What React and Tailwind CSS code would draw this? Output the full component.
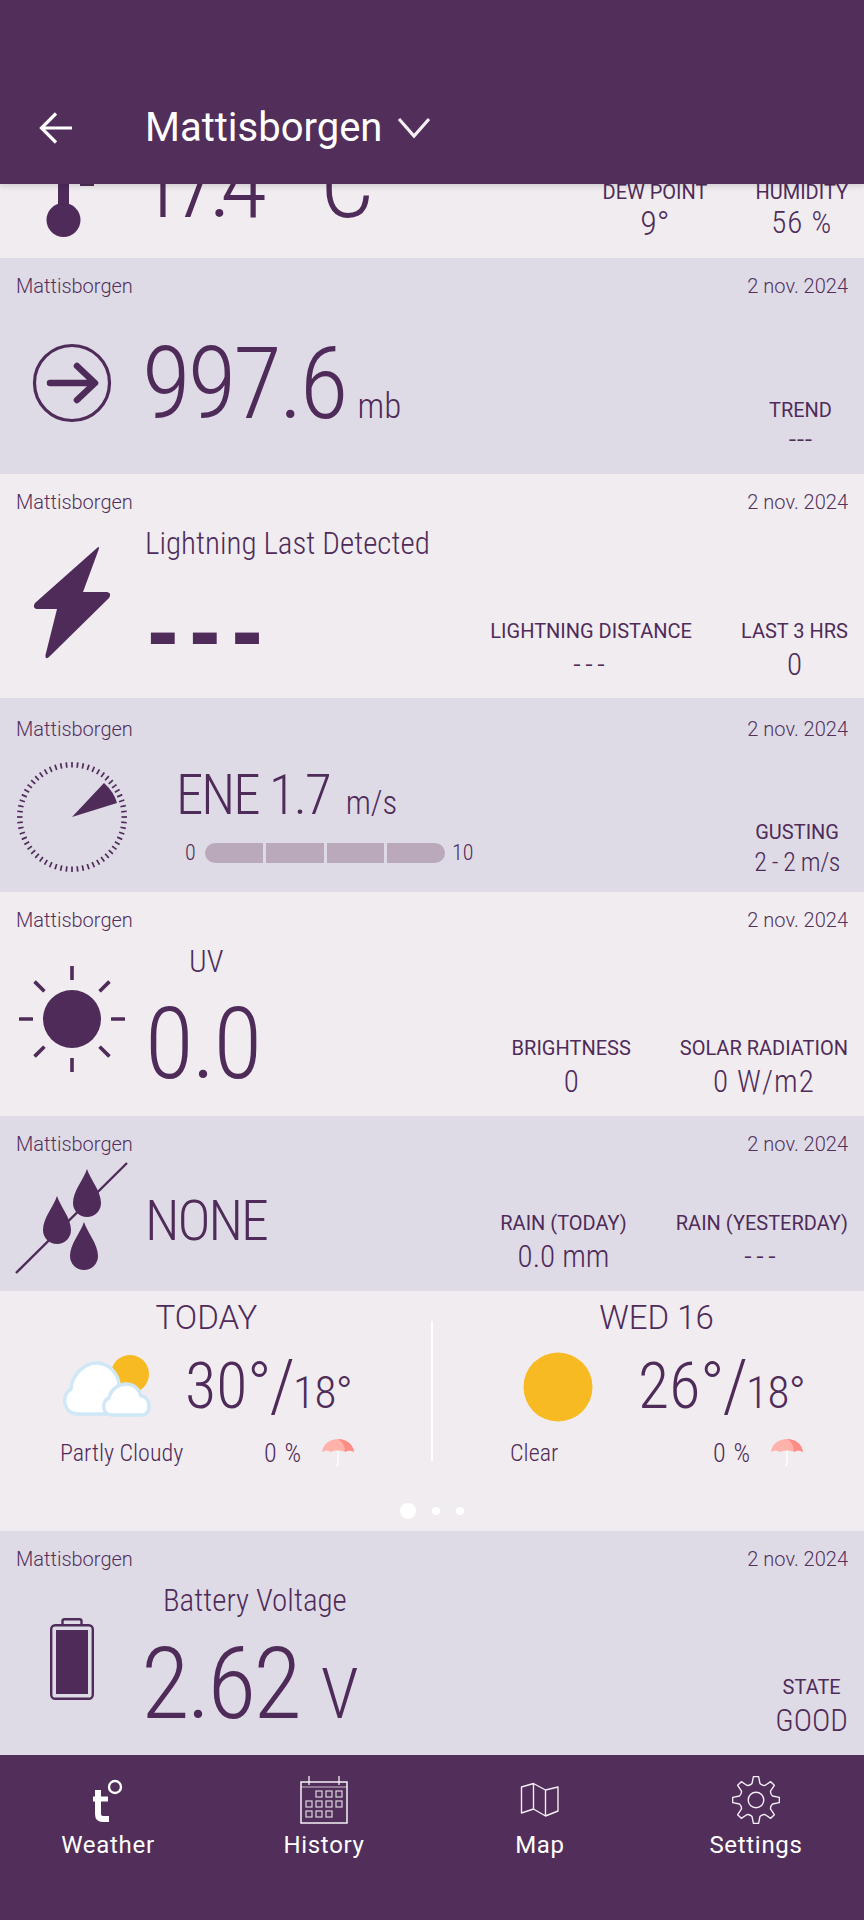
const D = "font-['Roboto'] font-light font-stretch-condensed";
const B = "font-['Roboto'] font-[360] font-stretch-condensed";

function Head({ top = "h-[56px]" }) {
  return (
    <div className={`flex justify-between items-center px-4 text-[20px] font-['Roboto'] font-light text-[#53305c] shrink-0 ${top}`}>
      <span>Mattisborgen</span>
      <span>2 nov. 2024</span>
    </div>
  );
}

function Stat({ label, value, valueClass = "text-[31px]", vm = "mt-[4px]" }) {
  return (
    <div className="flex flex-col items-center text-[#4f2b59] whitespace-nowrap">
      <span className="font-['Roboto'] font-normal text-[20px] leading-[24px]">{label}</span>
      <span className={`${D} leading-[36px] ${vm} ${valueClass}`}>{value}</span>
    </div>
  );
}

function Thermo() {
  return (
    <svg width="60" height="60" viewBox="0 0 60 60" className="ml-[40px] shrink-0">
      <rect x="18" y="-10" width="11" height="35" fill="#4f2b59" />
      <circle cx="23.5" cy="36" r="17" fill="#4f2b59" />
      <rect x="40" y="0" width="14" height="2" fill="#4f2b59" />
    </svg>
  );
}

function Pressure() {
  return (
    <svg width="80" height="80" viewBox="0 0 80 80" className="ml-[32px] shrink-0">
      <circle cx="40" cy="40" r="37.5" fill="none" stroke="#4f2b59" strokeWidth="3.2" />
      <path d="M18 40H62M45 23L63 40L45 57" fill="none" stroke="#4f2b59" strokeWidth="6.5" strokeLinecap="round" strokeLinejoin="round" />
    </svg>
  );
}

function Bolt() {
  return (
    <svg width="78" height="114" viewBox="0 0 78 114" className="ml-[33px] shrink-0">
      <path d="M64 3 Q67 0 65.5 5 L50 47 L74 47 Q79 48 76 53 L17 111 Q12 116 12.5 110 L24 64 L4 64 Q-1 63 2 58 Z" fill="#4f2b59" />
    </svg>
  );
}

function Gauge() {
  const ticks = Array.from({ length: 60 }, (_, i) => {
    const a = (i / 60) * Math.PI * 2;
    return (
      <line
        key={i}
        x1={56 + Math.cos(a) * 49.5}
        y1={56 + Math.sin(a) * 49.5}
        x2={56 + Math.cos(a) * 55}
        y2={56 + Math.sin(a) * 55}
        stroke="#4f2b59"
        strokeWidth="1.7"
      />
    );
  });
  return (
    <svg width="112" height="112" viewBox="0 0 112 112" className="ml-[16px] shrink-0">
      {ticks}
      <path d="M56 56 L88 22 Q98 31 101 42 Z" fill="#4f2b59" />
    </svg>
  );
}

function Sun() {
  const rays = [0, 45, 90, 135, 180, 225, 270, 315];
  return (
    <svg width="112" height="112" viewBox="0 0 112 112" className="ml-[16px] shrink-0">
      {rays.map((r) => (
        <rect key={r} x="54.2" y="3" width="3.6" height="14" rx="0.5" fill="#4f2b59" transform={`rotate(${r} 56 56)`} />
      ))}
      <circle cx="56" cy="56" r="29" fill="#4f2b59" />
    </svg>
  );
}

function Drops() {
  const drop = "M0 -24 C3 -14 14 -2 14 10 A14 14 0 0 1 -14 10 C-14 -2 -3 -14 0 -24Z";
  return (
    <svg width="116" height="114" viewBox="0 0 116 114" className="ml-[14px] shrink-0">
      <line x1="2" y1="112" x2="113" y2="2" stroke="#4f2b59" strokeWidth="2.4" />
      <path d={drop} transform="translate(73 32)" fill="#4f2b59" />
      <path d={drop} transform="translate(43 59)" fill="#4f2b59" />
      <path d={drop} transform="translate(70 85)" fill="#4f2b59" />
    </svg>
  );
}

function Battery() {
  return (
    <svg width="44" height="82" viewBox="0 0 44 82" className="ml-[50px] shrink-0">
      <rect x="1.2" y="7.2" width="41.6" height="73.6" rx="4" fill="none" stroke="#4f2b59" strokeWidth="2.4" />
      <path d="M12.5 7V3Q12.5 1.2 14.5 1.2H29.5Q31.5 1.2 31.5 3V7" fill="none" stroke="#4f2b59" strokeWidth="2.4" />
      <rect x="6" y="12" width="32" height="64" fill="#4f2b59" />
    </svg>
  );
}

function PartlyCloudy() {
  return (
    <svg width="92" height="66" viewBox="0 0 92 66" className="shrink-0">
      <circle cx="70" cy="20" r="19" fill="#f7ba22" />
      <path d="M18 60 C4 60 0 42 11 35 C12 18 28 8 38 9 C50 10 58 20 59 30 L62 60 Z" fill="#fff" stroke="#cfe7f6" strokeWidth="3.5" strokeLinejoin="round" />
      <path d="M52 61 C42 61 41 47 49 44 C51 34 60 30 66 30 C74 30 80 36 81 42 C91 42 92 61 82 61 Z" fill="#fff" stroke="#cfe7f6" strokeWidth="3.5" strokeLinejoin="round" />
    </svg>
  );
}

function ClearSun() {
  return (
    <svg width="70" height="70" viewBox="0 0 70 70" className="shrink-0">
      <circle cx="35" cy="35" r="34.5" fill="#f7ba22" />
    </svg>
  );
}

function Umbrella() {
  return (
    <svg width="32" height="30" viewBox="0 0 32 30" className="shrink-0">
      <path d="M16 1 V25 Q16 28 14 28" fill="none" stroke="#fff" strokeWidth="1.2" />
      <path d="M0 14 C1 6 8 1 16 1 C24 1 31 6 32 14 C28 12 26 12 23 14 C20 12 12 12 9 14 C6 12 3 12 0 14Z" fill="#ffb2aa" />
      <path d="M16 1 C21 4 23 9 23 14 C26 12 29 12 32 14 C31 6 24 1 16 1Z" fill="#ff8d84" />
    </svg>
  );
}

function Temps({ hi, lo }) {
  return (
    <div className={`${D} flex items-end text-[#4f2b59]`}>
      <span className="text-[64px] leading-[52px]">{hi}</span>
      <span className="text-[72px] leading-[52px] -mx-[2px]">/</span>
      <span className="text-[45px] leading-[40px] tracking-[-0.5px]">{lo}</span>
    </div>
  );
}

function Forecast() {
  return (
    <div className="h-[240px] bg-[#f0ecf0] flex flex-col">
      <div className="flex h-[170px] mt-[13px] text-[#4f2b59]">
        <div className="w-[431px] flex flex-col shrink-0">
          <div className="font-['Roboto'] font-light text-[33px] leading-[32px] text-center -ml-[18px] -mt-[2px]">TODAY</div>
          <div className="flex items-center mt-[18px] ml-[60px] gap-[33px] h-[70px]">
            <PartlyCloudy />
            <Temps hi="30°" lo="18°" />
          </div>
          <div className={`${D} flex items-center mt-[15px] ml-[60px] text-[24px] leading-[32px]`}>
            <span className="w-[204px]">Partly Cloudy</span>
            <span className="w-[58px] text-[26px] tracking-[1px]">0 %</span>
            <Umbrella />
          </div>
        </div>
        <div className="w-[2px] h-[140px] bg-white mt-[17px] shrink-0"></div>
        <div className="flex flex-col flex-1">
          <div className="font-['Roboto'] font-light text-[33px] leading-[32px] text-center pl-[16px] -mt-[2px]">WED 16</div>
          <div className="flex items-center mt-[18px] ml-[90px] gap-[45px] h-[70px]">
            <ClearSun />
            <Temps hi="26°" lo="18°" />
          </div>
          <div className={`${D} flex items-center mt-[15px] ml-[77px] text-[24px] leading-[32px]`}>
            <span className="w-[203px]">Clear</span>
            <span className="w-[58px] text-[26px] tracking-[1px]">0 %</span>
            <Umbrella />
          </div>
        </div>
      </div>
      <div className="flex justify-center items-center gap-[16px] mt-[29px] h-[16px]">
        <span className="w-[16px] h-[16px] rounded-full bg-white"></span>
        <span className="w-[8px] h-[8px] rounded-full bg-white"></span>
        <span className="w-[8px] h-[8px] rounded-full bg-white"></span>
      </div>
    </div>
  );
}

function Calendar() {
  return (
    <svg width="48" height="48" viewBox="0 0 48 48">
      <rect x="1" y="6" width="46" height="41" fill="none" stroke="#fff" strokeWidth="1.4" />
      <path d="M1 11H47" stroke="#fff" strokeWidth="1.2" opacity="0.7" />
      <path d="M9 0V9M39 0V9" stroke="#fff" strokeWidth="1.2" />
      {[[16,15],[26,15],[36,15],[6,25],[16,25],[26,25],[36,25],[6,35],[16,35],[26,35]].map(([x, y]) => (
        <rect key={`${x}-${y}`} x={x} y={y} width="6" height="6" fill="none" stroke="#fff" strokeWidth="1.2" opacity="0.8" />
      ))}
    </svg>
  );
}

function Gear() {
  const n = 8;
  let d = "";
  for (let i = 0; i < n; i++) {
    const a = (i / n) * Math.PI * 2 - Math.PI / 2;
    const step = (Math.PI * 2) / n;
    const p = (r, o) => `${(24 + Math.cos(a + o) * r).toFixed(2)} ${(24 + Math.sin(a + o) * r).toFixed(2)}`;
    d += `${i === 0 ? "M" : "L"}${p(17, -step * 0.3)} L${p(23.5, -step * 0.14)} L${p(23.5, step * 0.14)} L${p(17, step * 0.3)} `;
    d += `Q${p(15.5, step * 0.5)} ${p(17, step * 0.7)} `;
  }
  d += "Z";
  return (
    <svg width="48" height="48" viewBox="0 0 48 48">
      <path d={d} fill="none" stroke="#f3eef3" strokeWidth="1.4" strokeLinejoin="round" />
      <circle cx="24" cy="24" r="7.8" fill="none" stroke="#f3eef3" strokeWidth="1.4" />
    </svg>
  );
}

function MapIcon() {
  return (
    <svg width="40" height="36" viewBox="0 0 40 36" className="my-[6px]">
      <path d="M1.5 5 L13.5 1.5 L25.5 8 L38 5 V29 L25.5 34 L13.5 27 L1.5 31 Z M13.5 1.5 V27 M25.5 8 V34" fill="none" stroke="#f3eef3" strokeWidth="1.4" strokeLinejoin="round" />
    </svg>
  );
}

function TDeg() {
  return (
    <svg width="32" height="48" viewBox="0 0 32 48">
      <path d="M6 14 V38 Q6 43 11 43 H17" fill="none" stroke="#fff" strokeWidth="6" />
      <path d="M1 23 H16" stroke="#fff" strokeWidth="5" />
      <circle cx="23" cy="11" r="6" fill="none" stroke="#fff" strokeWidth="2.4" />
    </svg>
  );
}

function NavItem({ icon, label }) {
  return (
    <div className="flex-1 flex flex-col items-center">
      <div className="h-[48px] flex items-center justify-center">{icon}</div>
      <span className="text-[24px] leading-[28px] font-['Roboto'] text-white tracking-[0.7px] mt-[7px]">{label}</span>
    </div>
  );
}

export default function App() {
  return (
    <div className="w-[864px] h-[1920px] overflow-hidden flex flex-col bg-[#f0ecf0]">
      <header className="h-[184px] bg-[#522e5b] flex items-center shrink-0 relative z-10 shadow-[0_2px_6px_rgba(0,0,0,0.15)] pt-[72px]">
        <svg width="34" height="32" viewBox="0 0 34 32" className="ml-[39px]">
          <path d="M17 1.5 L2.5 16 L17 30.5 M3 16 H33" fill="none" stroke="#fff" strokeWidth="3.2" />
        </svg>
        <span className="ml-[72px] text-white text-[40px] font-['Roboto'] leading-[44px]">Mattisborgen</span>
        <svg width="34" height="22" viewBox="0 0 34 22" className="ml-[15px]">
          <path d="M2 2 L17 19 L32 2" fill="none" stroke="#f5f0f5" strokeWidth="3.2" />
        </svg>
      </header>

      <section className="h-[74px] bg-[#f0ecf0] overflow-hidden flex shrink-0">
        <div className="w-full flex">
          <Thermo />
          <span className={`${B} text-[96px] leading-[72px] tracking-[-11px] text-[#4f2b59] ml-[37px] -mt-[36px]`}>17.4</span>
          <span className={`${B} text-[96px] leading-[72px] text-[#4f2b59] ml-[64px] -mt-[36px]`}>C</span>
          <div className="ml-auto mr-[16px] flex gap-[48px] -mt-[4px]">
            <Stat label="DEW POINT" value="9°" valueClass="text-[34px]" vm="mt-[1px]" />
            <Stat label="HUMIDITY" value="56 %" valueClass="text-[31px] tracking-[1px]" vm="mt-[1px]" />
          </div>
        </div>
      </section>

      <section className="h-[216px] bg-[#dedbe6] flex flex-col shrink-0">
        <Head />
        <div className="flex items-start">
          <div className="mt-[29px]"><Pressure /></div>
          <div className={`${B} text-[#4f2b59] ml-[30px] mt-[20px] flex items-baseline`}>
            <span className="text-[100px] leading-[100px] tracking-[-3px]">997.6</span>
            <span className={`${D} text-[35px] ml-[12px] leading-[32px]`}>mb</span>
          </div>
          <div className="ml-auto mr-[32px] mt-[84px]">
            <Stat label="TREND" value="---" valueClass="text-[31px]" vm="mt-[0px]" />
          </div>
        </div>
      </section>

      <section className="h-[224px] bg-[#f0ecf0] flex flex-col shrink-0">
        <Head />
        <div className="flex items-start">
          <div className="mt-[15px]"><Bolt /></div>
          <div className={`${D} text-[#4f2b59] ml-[34px] flex flex-col`}>
            <span className="text-[31px] leading-[36px] -mt-[4px]">Lightning Last Detected</span>
            <span className="text-[100px] leading-[60px] tracking-[6px] mt-[43px] font-bold">---</span>
          </div>
          <div className="ml-auto mr-[16px] mt-[89px] flex gap-[49px]">
            <Stat label="LIGHTNING DISTANCE" value="---" valueClass="text-[31px] tracking-[4px]" />
            <Stat label="LAST 3 HRS" value="0" />
          </div>
        </div>
      </section>

      <section className="h-[194px] bg-[#dedbe6] flex flex-col shrink-0">
        <Head top="h-[62px]" />
        <div className="flex items-start">
          <div className="mt-[1px]"><Gauge /></div>
          <div className="ml-[50px] flex flex-col text-[#4f2b59]">
            <div className={`${D} flex items-baseline mt-[5px] -ml-[2px]`}>
              <span className="text-[55px] leading-[60px] tracking-[-2px]">ENE 1.7</span>
              <span className="text-[33px] leading-[30px] ml-[16px]">m/s</span>
            </div>
            <div className={`${D} flex items-center mt-[11px] text-[22px]`}>
              <span className="ml-[7px] w-[20px]">0</span>
              <div className="w-[240px] h-[20px] rounded-full overflow-hidden flex gap-[3px] bg-[#dedbe6]">
                <span className="flex-1 bg-[#b9a9bb]"></span>
                <span className="flex-1 bg-[#b9a9bb]"></span>
                <span className="flex-1 bg-[#b9a9bb]"></span>
                <span className="flex-1 bg-[#b9a9bb]"></span>
              </div>
              <span className="ml-[7px]">10</span>
            </div>
          </div>
          <div className="ml-auto mr-[24px] mt-[60px]">
            <Stat label="GUSTING" value="2 - 2 m/s" valueClass="text-[26px] tracking-[-0.5px]" vm="mt-[0px]" />
          </div>
        </div>
      </section>

      <section className="h-[224px] bg-[#f0ecf0] flex flex-col shrink-0">
        <Head />
        <div className="flex items-start">
          <div className="mt-[15px]"><Sun /></div>
          <div className={`${B} text-[#4f2b59] ml-[17px] flex flex-col`}>
            <span className={`${D} text-[31px] leading-[36px] ml-[44px] -mt-[4px]`}>UV</span>
            <span className="text-[100px] leading-[100px] mt-[14px] tracking-[-2px]">0.0</span>
          </div>
          <div className="ml-auto mr-[16px] mt-[88px] flex gap-[49px]">
            <Stat label="BRIGHTNESS" value="0" />
            <Stat label="SOLAR RADIATION" value="0 W/m2" valueClass="text-[31px] tracking-[1px]" />
          </div>
        </div>
      </section>

      <section className="h-[175px] bg-[#dedbe6] flex flex-col shrink-0">
        <Head />
        <div className="flex items-start">
          <div className="-mt-[11px]"><Drops /></div>
          <span className={`${D} text-[56px] leading-[60px] tracking-[-2px] text-[#4f2b59] ml-[15px] mt-[19px]`}>NONE</span>
          <div className="ml-auto mr-[16px] mt-[39px] flex gap-[49px]">
            <Stat label="RAIN (TODAY)" value="0.0 mm" />
            <Stat label="RAIN (YESTERDAY)" value="---" valueClass="text-[31px] tracking-[4px]" />
          </div>
        </div>
      </section>

      <Forecast />

      <section className="h-[224px] bg-[#dedbe6] flex flex-col shrink-0">
        <Head />
        <div className="flex items-start">
          <div className="mt-[31px]"><Battery /></div>
          <div className={`${B} text-[#4f2b59] ml-[47px] flex flex-col`}>
            <span className={`${D} text-[31px] leading-[36px] ml-[22px] -mt-[4px]`}>Battery Voltage</span>
            <div className="flex items-baseline mt-[15px]">
              <span className="text-[100px] leading-[100px] tracking-[-3px]">2.62</span>
              <span className="text-[70px] leading-[66px] ml-[22px]">V</span>
            </div>
          </div>
          <div className="ml-auto mr-[16px] mt-[88px]">
            <Stat label="STATE" value="GOOD" />
          </div>
        </div>
      </section>

      <nav className="flex-1 bg-[#522e5b] flex pt-[21px]">
        <NavItem icon={<TDeg />} label="Weather" />
        <NavItem icon={<Calendar />} label="History" />
        <NavItem icon={<MapIcon />} label="Map" />
        <NavItem icon={<Gear />} label="Settings" />
      </nav>
    </div>
  );
}
